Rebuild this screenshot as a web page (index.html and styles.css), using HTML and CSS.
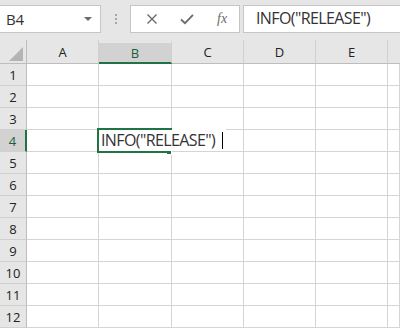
FILE: index.html
```html
<!DOCTYPE html>
<html>

<head>
    <!-- Excel formula bar and sheet -->
    <title>Sheet</title>
    <link rel="stylesheet" href="styles.css">
</head>

<body>
    <div class="app">
        <div class="toolbar">
            <div class="name-box">
                <span class="name-text">B4</span>
                <span class="drop-arrow"></span>
            </div>
            <div class="grip">
                <span class="dot"></span>
                <span class="dot"></span>
                <span class="dot"></span>
            </div>
            <div class="action-box">
                <svg class="icon" width="12" height="12" viewBox="0 0 12 12">
                    <path d="M1.5 1.5 L10.5 10.5 M10.5 1.5 L1.5 10.5" stroke="#6b6b6b" stroke-width="1.4" fill="none"/>
                </svg>
                <svg class="icon" width="14" height="12" viewBox="0 0 14 12">
                    <path d="M1 6.5 L5 10.2 L13 1.8" stroke="#6b6b6b" stroke-width="1.8" fill="none"/>
                </svg>
                <span class="fx">fx</span>
            </div>
            <div class="formula-box">INFO("RELEASE")</div>
        </div>

        <div class="sheet">
            <div class="corner"><span class="triangle"></span></div>
            <div class="col-head">A</div>
            <div class="col-head selected">B</div>
            <div class="col-head">C</div>
            <div class="col-head">D</div>
            <div class="col-head">E</div>
            <div class="col-head last"></div>
        </div>
        <div class="sheet" id="rows"></div>
    </div>

    <script>
        var rows = document.getElementById("rows");
        for (var r = 1; r <= 12; r++) {
            var head = document.createElement("div");
            head.className = r === 4 ? "row-head selected" : "row-head";
            head.innerHTML = r;
            rows.appendChild(head);
            for (var c = 0; c < 6; c++) {
                var cell = document.createElement("div");
                cell.className = "cell";
                if (r === 4 && c === 1) {
                    cell.className = "cell active";
                    cell.innerHTML = '<div class="editor">INFO("RELEASE")<span class="caret"></span></div>' +
                        '<div class="sel-top"></div><div class="sel-left"></div><div class="sel-bottom"></div><div class="handle"></div>';
                }
                rows.appendChild(cell);
            }
        }
    </script>
</body>

</html>
```

FILE: styles.css
```css
* {
    margin: 0px;
    box-sizing: border-box;
}

body {
    background-color: #ffffff;
    font-family: "Open Sans", sans-serif;
    overflow: hidden;
}

.app {
    width: 400px;
    height: 330px;
    overflow: hidden;
}

.toolbar {
    display: flex;
    align-items: flex-start;
    height: 40px;
    padding-top: 5px;
    background-color: #e6e6e6;
}

.name-box {
    display: flex;
    align-items: center;
    justify-content: space-between;
    width: 102px;
    height: 28px;
    margin-left: -1px;
    padding: 0 8px 0 6px;
    background-color: #ffffff;
    border: 1px solid #c6c6c6;
}

.name-text {
    font-size: 15px;
    color: #333333;
    letter-spacing: -0.3px;
}

.drop-arrow {
    width: 0;
    height: 0;
    border-left: 4px solid transparent;
    border-right: 4px solid transparent;
    border-top: 4px solid #6b6b6b;
}

.grip {
    display: flex;
    flex-direction: column;
    gap: 2px;
    width: 29px;
    padding: 9px 0 0 14px;
}

.dot {
    width: 2px;
    height: 2px;
    background-color: #a6a6a6;
}

.action-box {
    display: flex;
    align-items: center;
    width: 110px;
    height: 28px;
    padding-left: 15px;
    gap: 22px;
    background-color: #ffffff;
    border: 1px solid #c6c6c6;
}

.fx {
    font-family: "Liberation Serif", serif;
    font-style: italic;
    font-size: 14px;
    color: #6b6b6b;
    margin-left: 1px;
}

.formula-box {
    flex: 1;
    height: 28px;
    margin-left: 3px;
    padding: 0 0 0 12px;
    background-color: #ffffff;
    border: 1px solid #c6c6c6;
    border-right: none;
    font-size: 16px;
    line-height: 25px;
    color: #333333;
    letter-spacing: -0.6px;
    white-space: nowrap;
}

.sheet {
    display: grid;
    grid-template-columns: 27px 72px 73px 72px 72px 72px 12px;
}

.corner,
.col-head {
    height: 24px;
    background-color: #e6e6e6;
    border-bottom: 1px solid #bdbdbd;
    border-right: 1px solid #d0d0d0;
}

.corner {
    position: relative;
    border-right: 1px solid #bdbdbd;
}

.triangle {
    position: absolute;
    right: 3px;
    bottom: 2px;
    width: 0;
    height: 0;
    border-left: 14px solid transparent;
    border-bottom: 14px solid #b4b4b4;
}

.col-head {
    display: flex;
    align-items: center;
    justify-content: center;
    font-size: 13px;
    color: #222222;
    padding-top: 1px;
}

.col-head.selected {
    background-color: #d2d2d2;
    border-top: 3px solid #e6e6e6;
    border-bottom: 2px solid #217346;
    color: #1b5e3a;
    padding-top: 0px;
}

.col-head.last {
    border-right: none;
}

.row-head {
    display: flex;
    align-items: center;
    justify-content: center;
    height: 22px;
    background-color: #e6e6e6;
    border-bottom: 1px solid #d0d0d0;
    border-right: 1px solid #bdbdbd;
    font-size: 13px;
    color: #222222;
    padding-top: 1px;
}

.row-head.selected {
    background-color: #d2d2d2;
    border-right: 2px solid #217346;
    color: #1b5e3a;
}

.cell {
    height: 22px;
    border-bottom: 1px solid #d4d4d4;
    border-right: 1px solid #d4d4d4;
}

.cell.active {
    position: relative;
}

.editor {
    position: absolute;
    left: -1px;
    top: -1px;
    width: 128px;
    height: 22px;
    padding: 0 0 0 3px;
    background-color: #ffffff;
    font-size: 16px;
    line-height: 22px;
    color: #333333;
    letter-spacing: -0.6px;
    white-space: nowrap;
    z-index: 1;
}

.caret {
    display: inline-block;
    width: 1px;
    height: 17px;
    margin-left: 7px;
    vertical-align: -3px;
    background-color: #000000;
}

.sel-top {
    position: absolute;
    left: -2px;
    top: -2px;
    width: 75px;
    height: 2px;
    background-color: #217346;
    z-index: 2;
}

.sel-left {
    position: absolute;
    left: -2px;
    top: -2px;
    width: 2px;
    height: 25px;
    background-color: #217346;
    z-index: 2;
}

.sel-bottom {
    position: absolute;
    left: -2px;
    top: 21px;
    width: 70px;
    height: 2px;
    background-color: #217346;
    z-index: 2;
}

.handle {
    position: absolute;
    left: 68px;
    top: 20px;
    width: 5px;
    height: 5px;
    background-color: #217346;
    border: 1px solid #ffffff;
    border-left: none;
    z-index: 2;
}
```
